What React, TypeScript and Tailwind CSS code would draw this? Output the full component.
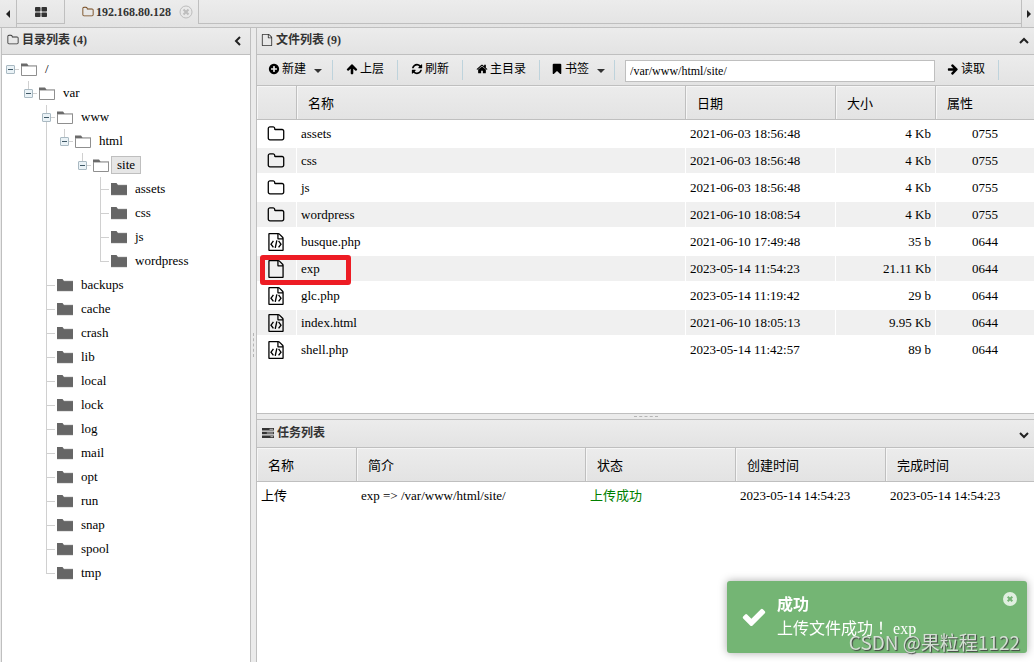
import React from "react";

const FA = {
  folder:
    "M1600 1312v-704q0-40-28-68t-68-28h-704q-40 0-68-28t-28-68v-64q0-40-28-68t-68-28h-320q-40 0-68 28t-28 68v960q0 40 28 68t68 28h1216q40 0 68-28t28-68zm128-704v704q0 92-66 158t-158 66h-1216q-92 0-158-66t-66-158v-960q0-92 66-158t158-66h320q92 0 158 66t66 158v32h672q92 0 158 66t66 158z",
  file: "M1596 380q28 28 48 76t20 88v1152q0 40-28 68t-68 28h-1344q-40 0-68-28t-28-68v-1600q0-40 28-68t68-28h896q40 0 88 20t76 48zm-444-244v376h376q-10-29-22-41l-313-313q-12-12-41-22zm384 1528v-1024h-416q-40 0-68-28t-28-68v-416h-768v1536h1280z",
  plus: "M1344 960v-128q0-26-19-45t-45-19h-256v-256q0-26-19-45t-45-19h-128q-26 0-45 19t-19 45v256h-256q-26 0-45 19t-19 45v128q0 26 19 45t45 19h256v256q0 26 19 45t45 19h128q26 0 45-19t19-45v-256h256q26 0 45-19t19-45zm320-64q0 209-103 385.5t-279.5 279.5-385.5 103-385.5-103-279.5-279.5-103-385.5 103-385.5 279.5-279.5 385.5-103 385.5 103 279.5 279.5 103 385.5z",
  up: "M1675 971q0 51-37 90l-75 75q-38 38-91 38-54 0-90-38l-294-293v704q0 52-37.5 84.5t-90.5 32.5h-128q-53 0-90.5-32.5t-37.5-84.5v-704l-294 293q-36 38-90 38t-90-38l-75-75q-38-38-38-90 0-53 38-91l651-651q35-37 90-37 54 0 91 37l651 651q37 39 37 91z",
  right:
    "M1600 960q0 54-37 91l-651 651q-39 37-91 37-51 0-90-37l-75-75q-38-38-38-91t38-91l293-293h-704q-52 0-84.5-37.5t-32.5-90.5v-128q0-53 32.5-90.5t84.5-37.5h704l-293-294q-38-36-38-90t38-90l75-75q38-38 90-38 53 0 91 38l651 651q37 35 37 90z",
  refresh:
    "M1639 1056q0 5-1 7-64 268-268 434.5t-478 166.5q-146 0-282.5-55t-243.5-157l-129 129q-19 19-45 19t-45-19-19-45v-448q0-26 19-45t45-19h448q26 0 45 19t19 45-19 45l-137 137q71 66 161 102t187 36q134 0 250-65t186-179q11-17 53-117 8-23 30-23h192q13 0 22.5 9.5t9.5 22.5zm25-800v448q0 26-19 45t-45 19h-448q-26 0-45-19t-19-45 19-45l138-138q-148-137-349-137-134 0-250 65t-186 179q-11 17-53 117-8 23-30 23h-199q-13 0-22.5-9.5t-9.5-22.5v-7q65-268 270-434.5t480-166.5q146 0 284 55.5t245 156.5l130-129q19-19 45-19t45 19 19 45z",
  home: "M1472 992v480q0 26-19 45t-45 19h-384v-384h-256v384h-384q-26 0-45-19t-19-45v-480q0-1 .5-3t.5-3l575-474 575 474q1 2 1 6zm223-69l-62 74q-8 9-21 11h-3q-13 0-21-7l-692-577-692 577q-12 8-24 7-13-2-21-11l-62-74q-8-10-7-23.5t11-21.5l719-599q32-26 76-26t76 26l244 204v-195q0-14 9-23t23-9h192q14 0 23 9t9 23v408l219 182q10 8 11 21.5t-7 23.5z",
  bookmark:
    "M1420 128q23 0 44 9 33 13 52.5 41t19.5 62v1289q0 34-19.5 62t-52.5 41q-19 8-44 8-48 0-83-32l-441-424-441 424q-36 33-83 33-23 0-44-9-33-13-52.5-41t-19.5-62v-1289q0-34 19.5-62t52.5-41q21-9 44-9h1048z",
  check:
    "M1671 566q0 40-28 68l-724 724-136 136q-28 28-68 28t-68-28l-136-136-362-362q-28-28-28-68t28-68l136-136q28-28 68-28t68 28l294 295 656-657q28-28 68-28t68 28l136 136q28 28 28 68z",
};

function Icon({ d, className }: { d: string; className: string }) {
  return (
    <svg viewBox="0 0 1792 1792" fill="currentColor" className={className} aria-hidden="true">
      <path d={d} />
    </svg>
  );
}

function CodeFileIcon() {
  return (
    <svg viewBox="0 0 1792 1792" className="size-[18px]" aria-hidden="true">
      <path d={FA.file} fill="currentColor" />
      <path
        d="M640 790L400 1110L640 1430M1152 790L1392 1110L1152 1430M980 740L820 1480"
        fill="none"
        stroke="currentColor"
        strokeWidth="135"
      />
    </svg>
  );
}

function Chevron({ d }: { d: string }) {
  return (
    <svg viewBox="0 0 10 10" className="size-[10px]" fill="none" stroke="#222" strokeWidth="2" aria-hidden="true">
      <path d={d} />
    </svg>
  );
}

function TreeFolder({ open }: { open: boolean }) {
  return open ? (
    <svg viewBox="0 0 16 13" className="h-[13px] w-4 shrink-0" aria-hidden="true">
      <path d="M0 0.5h6l1.5 2H16V4H0z" fill="#6b6b6b" />
      <path d="M0.5 3.5h15v9h-15z" fill="#fff" stroke="#8f8f8f" />
      <path d="M1 3.5h14" stroke="#c4c4c4" />
    </svg>
  ) : (
    <svg viewBox="0 0 16 13" className="h-[13px] w-4 shrink-0" aria-hidden="true">
      <path d="M0 0h5.5l1.5 2h9V12H0z" fill="#666" />
      <path d="M7 1.7h9M0 12.4h16" stroke="#d5d5d5" strokeWidth="0.7" />
    </svg>
  );
}

type Node = { name: string; selected?: boolean; children?: Node[] };

const leaf = (name: string): Node => ({ name });

const tree: Node = {
  name: "/",
  children: [
    {
      name: "var",
      children: [
        {
          name: "www",
          children: [
            {
              name: "html",
              children: [
                { name: "site", selected: true, children: ["assets", "css", "js", "wordpress"].map(leaf) },
              ],
            },
          ],
        },
        ...["backups", "cache", "crash", "lib", "local", "lock", "log", "mail", "opt", "run", "snap", "spool", "tmp"].map(leaf),
      ],
    },
  ],
};

function TreeItem({ node, root = false, last = true }: { node: Node; root?: boolean; last?: boolean }) {
  return (
    <li className="relative flex">
      <div className="mr-[2px] ml-[7px] flex w-[9px] shrink-0 flex-col">
        <div className={"h-[13px] border-b border-l border-b-[#d0d0d0] " + (root ? "border-l-transparent" : "border-l-[#d0d0d0]")} />
        <div className={"flex-1 border-l " + (last ? "border-transparent" : "border-[#d0d0d0]")} />
      </div>
      {node.children && (
        <button aria-label={"折叠 " + node.name} className="absolute top-2 left-[3px] flex size-[9px] items-center justify-center rounded-[1px] border border-[#a9b9c2] bg-[#eaf2f6]">
          <span className="h-px w-[5px] bg-[#3f5866]" />
        </button>
      )}
      <div>
        <div className="flex h-6 items-center">
          <TreeFolder open={!!node.children} />
          <span
            className={
              "ml-[2px] h-[18px] border px-[5px] text-[13px] leading-4 " +
              (node.selected ? "border-[#bfbfbf] bg-[#e6e6e6]" : "border-transparent")
            }
          >
            {node.name}
          </span>
        </div>
        {node.children && (
          <ul>
            {node.children.map((c, i) => (
              <TreeItem key={c.name} node={c} last={i === node.children!.length - 1} />
            ))}
          </ul>
        )}
      </div>
    </li>
  );
}

type FileRow = { kind: "dir" | "code" | "file"; name: string; date: string; size: string; mode: string };

const files: FileRow[] = [
  { kind: "dir", name: "assets", date: "2021-06-03 18:56:48", size: "4 Kb", mode: "0755" },
  { kind: "dir", name: "css", date: "2021-06-03 18:56:48", size: "4 Kb", mode: "0755" },
  { kind: "dir", name: "js", date: "2021-06-03 18:56:48", size: "4 Kb", mode: "0755" },
  { kind: "dir", name: "wordpress", date: "2021-06-10 18:08:54", size: "4 Kb", mode: "0755" },
  { kind: "code", name: "busque.php", date: "2021-06-10 17:49:48", size: "35 b", mode: "0644" },
  { kind: "file", name: "exp", date: "2023-05-14 11:54:23", size: "21.11 Kb", mode: "0644" },
  { kind: "code", name: "glc.php", date: "2023-05-14 11:19:42", size: "29 b", mode: "0644" },
  { kind: "code", name: "index.html", date: "2021-06-10 18:05:13", size: "9.95 Kb", mode: "0644" },
  { kind: "code", name: "shell.php", date: "2023-05-14 11:42:57", size: "89 b", mode: "0644" },
];

const shade = "bg-linear-to-b from-[#ececec] to-[#e3e3e3]";
const th =
  "h-[34px] border-r border-b border-[#bfbfbf] pt-[2px] pl-[11px] text-left font-normal shadow-[inset_1px_1px_0_#f6f6f6] last:border-r-0 bg-linear-to-b from-[#ececec] to-[#e3e3e3]";
const td = "h-[27px] border-y border-r border-white bg-clip-padding px-1 py-0 leading-[25px] last:border-r-0";

function Tool({ d, label, caret = false, className = "px-[13px]" }: { d: string; label: string; caret?: boolean; className?: string }) {
  return (
    <div className="flex h-[20px] items-center border-r border-[#bed3dc]">
      <button className={"flex h-[20px] items-center gap-[2px] pb-[2px] text-[12px] leading-[18px] " + className}>
        <Icon d={d} className="size-3" />
        <span>{label}</span>
        {caret && (
          <svg viewBox="0 0 8 4" className="mt-1 ml-[6px] h-1 w-2" aria-hidden="true">
            <path d="M0 0h8L4 4z" fill="#333" />
          </svg>
        )}
      </button>
    </div>
  );
}

export default function App() {
  return (
    <div className="flex h-screen flex-col overflow-hidden bg-[#ebebeb] font-['Liberation_Serif','Noto_Sans_CJK_SC',serif] text-[13px] text-black">
      <nav className={"flex h-7 shrink-0 border-b border-[#bfbfbf] " + shade}>
        <button aria-label="向左" className="flex w-[17px] items-center justify-center border-r border-[#bfbfbf]">
          <svg viewBox="0 0 4 8" className="h-2 w-1" aria-hidden="true"><path d="M4 0v8L0 4z" fill="#222" /></svg>
        </button>
        <button aria-label="主页" className="flex h-6 w-12 items-center justify-center border-r border-b border-[#bfbfbf]">
          <svg viewBox="0 0 12 10" className="h-[10px] w-3" fill="#333" aria-hidden="true">
            <rect width="5.5" height="4.5" rx="0.8" />
            <rect x="6.5" width="5.5" height="4.5" rx="0.8" />
            <rect y="5.5" width="5.5" height="4.5" rx="0.8" />
            <rect x="6.5" y="5.5" width="5.5" height="4.5" rx="0.8" />
          </svg>
        </button>
        <div className="flex h-6 items-center border-r border-[#bfbfbf] pr-[5px] pl-[17px] text-[12px] font-bold text-[#333]">
          <Icon d={FA.folder} className="mr-[2px] size-3 text-[#704214]" />
          <span>192.168.80.128</span>
          <button aria-label="关闭" className="ml-2">
            <svg viewBox="0 0 14 14" className="size-[14px]" fill="none" stroke="#bdbdbd" aria-hidden="true">
              <circle cx="7" cy="7" r="6" />
              <path d="M4.5 4.5l5 5M9.5 4.5l-5 5" strokeWidth="2" />
            </svg>
          </button>
        </div>
        <div className="h-6 flex-1 border-b border-[#bfbfbf]" />
        <button aria-label="向右" className="flex w-[13px] items-center justify-end border-l border-[#bfbfbf] pr-[3px]">
          <svg viewBox="0 0 4 8" className="h-2 w-1" aria-hidden="true"><path d="M0 0v8L4 4z" fill="#222" /></svg>
        </button>
      </nav>

      <div className="flex min-h-0 flex-1 pl-px">
        <aside className="flex w-[250px] shrink-0 flex-col border-x border-[#bfbfbf] bg-white">
          <header className={"flex h-[27px] shrink-0 items-center border-b border-[#bfbfbf] pr-[7px] pb-[2px] pl-[5px] text-[#333] " + shade}>
            <Icon d={FA.folder} className="mr-[3px] size-3" />
            <h2 className="flex-1 text-[12px] leading-6 font-bold">目录列表 (4)</h2>
            <button aria-label="收起目录" className="pt-[2px]"><Chevron d="M7 1L3 5l4 4" /></button>
          </header>
          <ul className="pt-[2px] pl-px">
            <TreeItem node={tree} root />
          </ul>
        </aside>

        <div className="flex w-[5px] shrink-0 items-center justify-center">
          <div className="h-6 border-l border-dashed border-[#b5b5b5]" />
        </div>

        <main className="flex min-w-0 flex-1 flex-col border-l border-[#bfbfbf]">
          <section className="flex h-[386px] shrink-0 flex-col border-b border-[#bfbfbf] bg-white">
            <header className={"flex h-[27px] shrink-0 items-center border-b border-[#bfbfbf] pr-[5px] pb-[2px] pl-1 text-[#333] " + shade}>
              <Icon d={FA.file} className="mr-[3px] size-3" />
              <h2 className="flex-1 text-[12px] leading-6 font-bold">文件列表 (9)</h2>
              <button aria-label="收起文件列表" className="pt-[2px]"><Chevron d="M1 7l4-4 4 4" /></button>
            </header>
            <div className={"flex h-[31px] shrink-0 items-start border-b border-[#bfbfbf] pt-[5px] " + shade}>
              <Tool d={FA.plus} label="新建" caret className="pr-[10px] pl-[11px]" />
              <Tool d={FA.up} label="上层" />
              <Tool d={FA.refresh} label="刷新" />
              <Tool d={FA.home} label="主目录" />
              <Tool d={FA.bookmark} label="书签" caret className="pr-[9px] pl-[11px]" />
              <input
                aria-label="路径"
                defaultValue="/var/www/html/site/"
                className="ml-[10px] h-[22px] w-[310px] border border-[#bfbfbf] bg-white px-1 text-[12px]"
              />
              <Tool d={FA.right} label="读取" className="pr-[13px] pl-[12px]" />
            </div>
            <table className="w-full table-fixed border-separate border-spacing-0">
              <colgroup>
                <col className="w-10" />
                <col />
                <col className="w-[150px]" />
                <col className="w-[100px]" />
                <col className="w-[98px]" />
              </colgroup>
              <thead>
                <tr>
                  <th className={th} aria-label="类型" />
                  <th className={th}>名称</th>
                  <th className={th}>日期</th>
                  <th className={th}>大小</th>
                  <th className={th}>属性</th>
                </tr>
              </thead>
              <tbody>
                {files.map((f) => (
                  <tr key={f.name} className="even:bg-[#f0f0f0]">
                    <td className={td + " relative"}>
                      <div className="flex pl-[6px]">
                        {f.kind === "code" ? <CodeFileIcon /> : <Icon d={f.kind === "dir" ? FA.folder : FA.file} className="size-[18px]" />}
                      </div>
                      {f.name === "exp" && (
                        <div className="absolute -top-px left-[3px] z-10 h-[30px] w-[91px] rounded-[3px] border-[5px] border-[#ed1c24]" />
                      )}
                    </td>
                    <td className={td}>{f.name}</td>
                    <td className={td}>{f.date}</td>
                    <td className={td + " text-right"}>{f.size}</td>
                    <td className={td + " text-center"}>{f.mode}</td>
                  </tr>
                ))}
              </tbody>
            </table>
          </section>

          <div className="flex h-[5px] shrink-0 items-center justify-center">
            <div className="w-6 border-t border-dashed border-[#b5b5b5]" />
          </div>

          <section className="flex-1 border-t border-[#bfbfbf] bg-white">
            <header className={"flex h-7 items-center border-b border-[#bfbfbf] pr-[5px] pb-[2px] pl-[5px] text-[#333] " + shade}>
              <svg viewBox="0 0 12 10" className="mr-[3px] h-[10px] w-3" aria-hidden="true">
                <path d="M0 0h12v2.6H0zM0 3.7h12v2.6H0zM0 7.4h12V10H0z" fill="#333" />
                <path d="M7.5 1.3h3.7M4.8 5h6.4M8.5 8.7h2.7" stroke="#ddd" strokeWidth="0.8" />
              </svg>
              <h2 className="flex-1 text-[12px] leading-6 font-bold">任务列表</h2>
              <button aria-label="收起任务列表" className="pt-1"><Chevron d="M1 3l4 4 4-4" /></button>
            </header>
            <table className="w-full table-fixed border-separate border-spacing-0">
              <colgroup>
                <col className="w-[100px]" />
                <col />
                <col className="w-[150px]" />
                <col className="w-[150px]" />
                <col className="w-[148px]" />
              </colgroup>
              <thead>
                <tr>
                  <th className={th}>名称</th>
                  <th className={th}>简介</th>
                  <th className={th}>状态</th>
                  <th className={th}>创建时间</th>
                  <th className={th}>完成时间</th>
                </tr>
              </thead>
              <tbody>
                <tr>
                  <td className={td}>上传</td>
                  <td className={td}>exp =&gt; /var/www/html/site/</td>
                  <td className={td + " text-[#008000]"}>上传成功</td>
                  <td className={td}>2023-05-14 14:54:23</td>
                  <td className={td}>2023-05-14 14:54:23</td>
                </tr>
              </tbody>
            </table>
          </section>
        </main>
      </div>

      <div role="status" className="fixed right-[7px] bottom-[9px] flex h-[72px] w-[300px] items-center rounded-[3px] bg-[#74b574] pl-[14px] text-[16px] leading-[22px] text-white shadow-[0_0_8px_#aaa]">
        <Icon d={FA.check} className="mr-[10px] size-[26px]" />
        <div>
          <div className="font-bold">成功</div>
          <div>
            上传文件成功<span className="font-['Noto_Sans_CJK_TC',sans-serif]" lang="zh-TW">！</span> exp
          </div>
        </div>
        <button aria-label="关闭通知" className="absolute top-[11px] right-[10px]">
          <svg viewBox="0 0 14 14" className="size-[14px]" aria-hidden="true">
            <circle cx="7" cy="7" r="7" fill="#e0efe0" />
            <path d="M4.7 4.7l4.6 4.6M9.3 4.7L4.7 9.3" stroke="#74b574" strokeWidth="2" />
          </svg>
        </button>
      </div>
      <div className="fixed right-[14px] bottom-2 font-['Noto_Sans_CJK_SC',sans-serif] text-[19px] leading-6 text-[#d5dfd5] [text-shadow:1px_1px_1px_#444]">
        CSDN @果粒程1122
      </div>
    </div>
  );
}
